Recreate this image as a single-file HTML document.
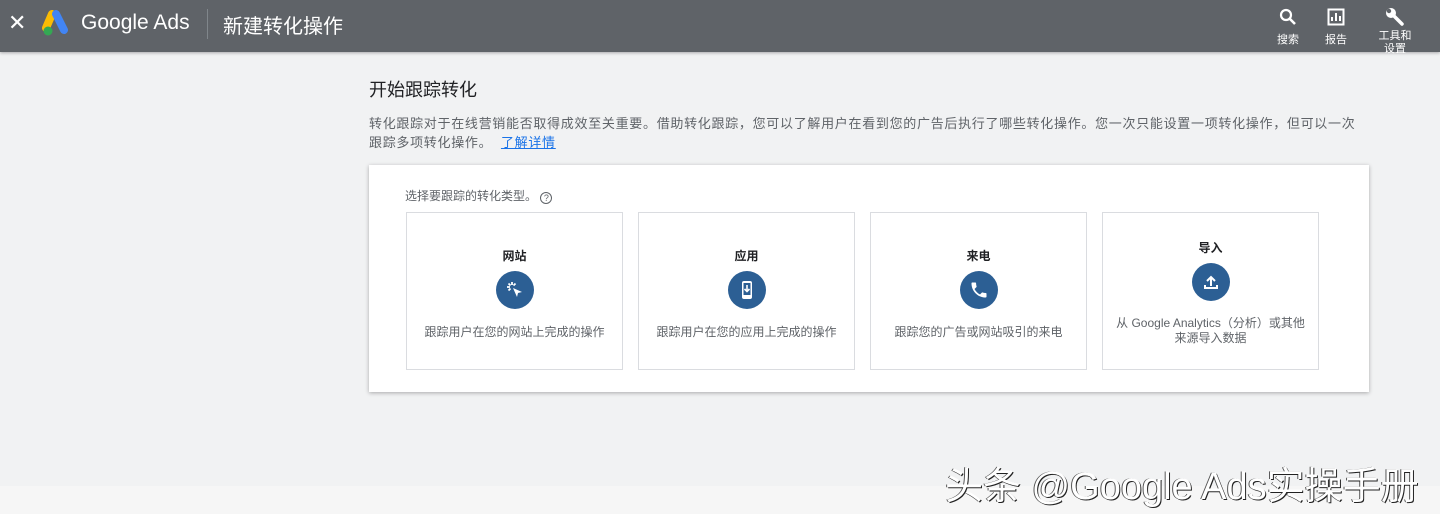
<!DOCTYPE html>
<html><head><meta charset="utf-8"><style>
*{margin:0;padding:0;box-sizing:border-box}
body{width:1440px;height:514px;background:#f1f2f3;font-family:"Liberation Sans","Noto Sans CJK SC",sans-serif;position:relative;overflow:hidden;color:#3c4043}
.hdr{position:absolute;left:0;top:0;width:1440px;height:52px;background:#5f6368;color:#fff;box-shadow:0 1px 3px rgba(0,0,0,.3)}
.abs{position:absolute}
.tile{position:absolute;top:212px;width:217px;height:158px;border:1px solid #dadce0;background:#fff;text-align:center}
.tile .t{position:absolute;left:0;right:0;top:34px;font-size:12px;font-weight:bold;color:#202124}
.tile .c{position:absolute;left:89px;top:58px;width:38px;height:38px;border-radius:50%;background:#2c5f94}
.tile .c svg{position:absolute;left:9px;top:9px}
.tile .d{position:absolute;left:0;right:0;top:110px;font-size:12px;color:#5f6368}
.nav{position:absolute;top:0;text-align:center;font-size:11px;color:#fff;width:50px}
</style></head><body>
<div class="hdr">
 <div class="abs" style="left:8px;top:10px;font-size:22px">✕</div>
 <svg class="abs" style="left:41px;top:10px" width="30" height="28" viewBox="0 0 30 28"><path d="M11 4 L5 18" stroke="#fbbc04" stroke-width="8" stroke-linecap="round"/><path d="M15 4 L23 20" stroke="#4285f4" stroke-width="8" stroke-linecap="round"/><circle cx="7" cy="21" r="4.5" fill="#34a853"/></svg>
 <div class="abs" style="left:81px;top:11px;font-size:21px;color:#fff">Google Ads</div>
 <div class="abs" style="left:207px;top:9px;width:1px;height:30px;background:#80868b"></div>
 <div class="abs" style="left:223px;top:10px;font-size:20px;color:#fff">新建转化操作</div>
 <div class="nav" style="left:1263px"><svg style="margin-top:8px" width="18" height="18" viewBox="0 0 18 18"><circle cx="7" cy="7" r="5" stroke="#fff" stroke-width="2.2" fill="none"/><path d="M11 11l5 5" stroke="#fff" stroke-width="2.6"/></svg><div style="margin-top:2px">搜索</div></div>
 <div class="nav" style="left:1311px"><svg style="margin-top:8px" width="18" height="18" viewBox="0 0 18 18"><rect x="1.5" y="1.5" width="15" height="15" stroke="#fff" stroke-width="2" fill="none"/><path d="M5 13V9M9 13V5M13 13V8" stroke="#fff" stroke-width="2"/></svg><div style="margin-top:2px">报告</div></div>
 <div class="nav" style="left:1370px;width:50px"><svg style="margin-top:7px" width="20" height="20" viewBox="0 0 20 20"><circle cx="6" cy="6" r="5" fill="#fff"/><circle cx="4" cy="4" r="2.2" fill="#5f6368"/><path d="M8 8l9 9" stroke="#fff" stroke-width="3.5" stroke-linecap="round"/></svg><div style="margin-top:0;line-height:13px">工具和<br>设置</div></div>
</div>
<div class="abs" style="left:369px;top:76px;font-size:18px;color:#202124">开始跟踪转化</div>
<div class="abs" style="left:369px;top:114px;width:1020px;font-size:13px;line-height:19px;color:#5f6368;letter-spacing:0.7px;white-space:nowrap">转化跟踪对于在线营销能否取得成效至关重要。借助转化跟踪，您可以了解用户在看到您的广告后执行了哪些转化操作。您一次只能设置一项转化操作，但可以一次<br>跟踪多项转化操作。 &nbsp;<span style="color:#1a73e8;text-decoration:underline">了解详情</span></div>
<div class="abs" style="left:369px;top:165px;width:1000px;height:227px;background:#fff;box-shadow:0 1px 4px rgba(0,0,0,.3)"></div>
<div class="abs" style="left:405px;top:187px;font-size:12px;color:#5f6368">选择要跟踪的转化类型。 <span style="display:inline-block;width:12px;height:12px;border:1px solid #5f6368;border-radius:50%;font-size:9px;text-align:center;line-height:11px;vertical-align:-1px">?</span></div>
<div class="tile" style="left:406px"><div class="t">网站</div><div class="c"><svg width="20" height="20" viewBox="0 0 20 20"><path d="M8 8l9 4-4 1-1 4z" fill="#fff"/><path d="M7 2v3M2 7h3M3.5 3.5l2 2M10.5 3.5l-2 2M3.5 10.5l2-2" stroke="#fff" stroke-width="1.8"/></svg></div><div class="d">跟踪用户在您的网站上完成的操作</div></div>
<div class="tile" style="left:638px"><div class="t">应用</div><div class="c"><svg width="20" height="20" viewBox="0 0 20 20"><rect x="5" y="1" width="10" height="18" rx="2" fill="#fff"/><rect x="6.5" y="3" width="7" height="12" fill="#2c5f94"/><path d="M10 5v6M7.5 9l2.5 2.5 2.5-2.5" stroke="#fff" stroke-width="1.6" fill="none"/></svg></div><div class="d">跟踪用户在您的应用上完成的操作</div></div>
<div class="tile" style="left:870px"><div class="t">来电</div><div class="c"><svg width="20" height="20" viewBox="0 0 24 24"><path d="M6.6 10.8c1.4 2.8 3.8 5.1 6.6 6.6l2.2-2.2c.3-.3.7-.4 1-.2 1.1.4 2.300.6 3.6.6.6 0 1 .4 1 1V20c0 .6-.4 1-1 1C10.6 21 3 13.4 3 4c0-.6.4-1 1-1h3.5c.6 0 1 .4 1 1 0 1.3.2 2.5.6 3.6.1.3 0 .7-.2 1z" fill="#fff"/></svg></div><div class="d">跟踪您的广告或网站吸引的来电</div></div>
<div class="tile" style="left:1102px"><div class="t" style="top:26px">导入</div><div class="c" style="top:50px"><svg width="20" height="20" viewBox="0 0 20 20"><path d="M10 14V5M6 9l4-4 4 4M4 13v3h12v-3" stroke="#fff" stroke-width="2" fill="none"/></svg></div><div class="d" style="top:103px;line-height:15px">从 Google Analytics（分析）或其他<br>来源导入数据</div></div>
<div class="abs" style="left:0;top:486px;width:1440px;height:28px;background:#f6f6f6"></div>
<div class="abs" style="left:945px;top:455px;font-size:38px;color:#fff;text-shadow:1px 1px 0 #222,-1px 0 0 #555">头条 @Google Ads实操手册</div>
</body></html>
